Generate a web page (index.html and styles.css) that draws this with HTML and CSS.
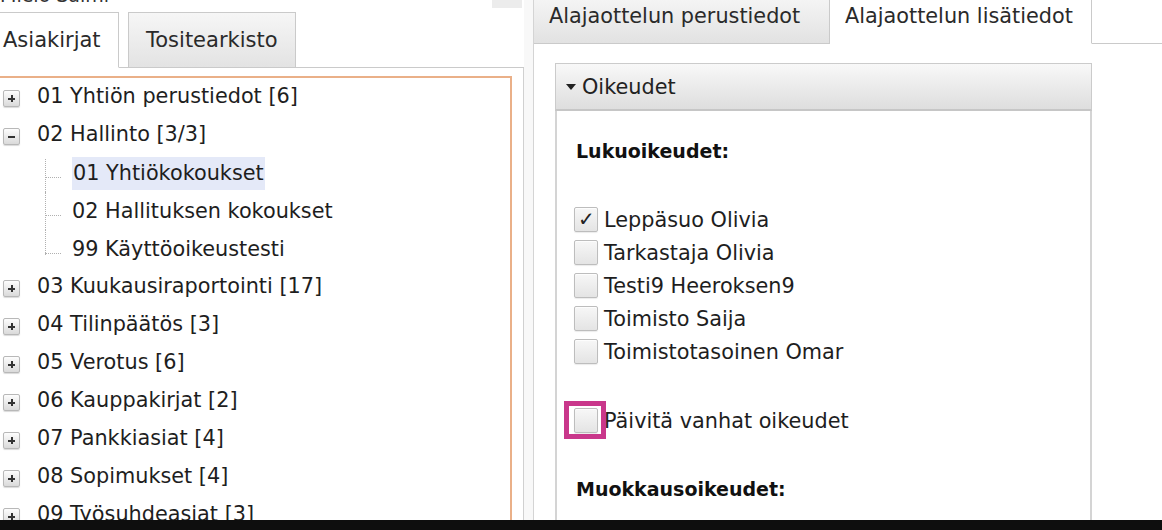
FILE: index.html
```html
<!DOCTYPE html>
<html lang="fi">
<head>
    <meta charset="UTF-8">
    <meta name="viewport" content="width=device-width, initial-scale=1.0">
    <title>Asiakirjat</title>
    <link rel="stylesheet" href="styles.css">
</head>
<body>
    <div class="screen">
        <div class="left">
            <div class="topline">
                <span class="user">Mielo Salmi</span>
                <span class="topbtn"></span>
            </div>
            <div class="tabs">
                <div class="tab active">Asiakirjat</div>
                <div class="tab-gap"></div>
                <div class="tab">Tositearkisto</div>
                <div class="tab-fill"></div>
            </div>
            <div class="tabpanel">
                <div class="treebox">
                    <ul class="tree">
                        <li><span class="tog"></span>01 Yhtiön perustiedot [6]</li>
                        <li><span class="tog minus"></span>02 Hallinto [3/3]</li>
                        <li class="sub">
                            <ul>
                                <li><span class="sel">01 Yhtiökokoukset</span></li>
                                <li>02 Hallituksen kokoukset</li>
                                <li>99 Käyttöoikeustesti</li>
                            </ul>
                        </li>
                        <li><span class="tog"></span>03 Kuukausiraportointi [17]</li>
                        <li><span class="tog"></span>04 Tilinpäätös [3]</li>
                        <li><span class="tog"></span>05 Verotus [6]</li>
                        <li><span class="tog"></span>06 Kauppakirjat [2]</li>
                        <li><span class="tog"></span>07 Pankkiasiat [4]</li>
                        <li><span class="tog"></span>08 Sopimukset [4]</li>
                        <li><span class="tog"></span>09 Työsuhdeasiat [3]</li>
                    </ul>
                </div>
            </div>
        </div>
        <div class="splitter"></div>
        <div class="right">
            <div class="rtabs">
                <div class="rtab">Alajaottelun perustiedot</div>
                <div class="rtab active">Alajaottelun lisätiedot</div>
                <div class="rtab-fill"></div>
            </div>
            <div class="rcontent">
                <div class="panel">
                    <div class="panel-head"><span class="caret"></span>Oikeudet</div>
                    <div class="panel-body">
                        <h4>Lukuoikeudet:</h4>
                        <ul class="checks">
                            <li><span class="cb checked"></span>Leppäsuo Olivia</li>
                            <li><span class="cb"></span>Tarkastaja Olivia</li>
                            <li><span class="cb"></span>Testi9 Heeroksen9</li>
                            <li><span class="cb"></span>Toimisto Saija</li>
                            <li><span class="cb"></span>Toimistotasoinen Omar</li>
                        </ul>
                        <div class="update"><span class="cb marked"></span>Päivitä vanhat oikeudet</div>
                        <h4 class="edit">Muokkausoikeudet:</h4>
                    </div>
                </div>
            </div>
        </div>
    </div>
    <div class="bar"></div>
</body>
</html>
```
FILE: styles.css
```css
* {
    box-sizing: border-box;
    font-family: "DejaVu Sans", "Liberation Sans", sans-serif;
}
*::before,
*::after {
    box-sizing: border-box;
}
body {
    margin: 0;
    width: 1162px;
    height: 530px;
    overflow: hidden;
    background: #fff;
    color: #1e1e1e;
    font-size: 20.8px;
}
ul {
    list-style: none;
    margin: 0;
    padding: 0;
}
.screen {
    display: flex;
    height: 520px;
    overflow: hidden;
}
.bar {
    height: 10px;
    background: #0e0e0e;
}

/* left side */
.left {
    width: 524px;
    flex: none;
}
.topline {
    display: flex;
    justify-content: space-between;
    height: 12px;
    overflow: hidden;
}
.user {
    display: block;
    margin-top: -5px;
    line-height: 0;
    color: #333;
    font-size: 19px;
}
.topbtn {
    width: 30px;
    height: 8px;
    margin-right: 2px;
    background: #ececec;
}
.tabs {
    display: flex;
    align-items: flex-end;
    height: 56px;
}
.tab {
    height: 56px;
    line-height: 55px;
    padding: 0 17px;
    border: 1px solid #cacaca;
    background: linear-gradient(#f6f6f6, #e3e3e3);
    color: #2a2a2a;
    font-size: 21px;
    white-space: nowrap;
}
.tab.active {
    width: 119px;
    padding: 0 3px;
    border-left: none;
    border-bottom-color: #fff;
    background: #fff;
}
.tab-gap {
    width: 9px;
    border-bottom: 1px solid #cacaca;
}
.tab-fill {
    flex: 1;
    border-bottom: 1px solid #cacaca;
}
.tab-gap, .tab-fill {
    align-self: stretch;
}
.tabpanel {
    height: 452px;
    border-right: 1px solid #d0d0d0;
    padding: 8px 11px 0 0;
}
.treebox {
    height: 100%;
    border: 2px solid #eab088;
    border-left: none;
    border-bottom: none;
}
.tree > li {
    height: 38px;
    line-height: 37px;
    white-space: nowrap;
}
.tree > li.sub {
    height: auto;
}
.tog {
    display: inline-block;
    width: 17px;
    height: 17px;
    margin: 0 17px 0 3px;
    vertical-align: -4px;
    border: 1px solid #b8b8b8;
    border-radius: 2px;
    background:
        linear-gradient(#333, #333) center / 7px 2px no-repeat,
        linear-gradient(#333, #333) center / 2px 7px no-repeat,
        linear-gradient(#fdfdfd, #dadada);
    box-shadow: 0 1px 1px rgba(0, 0, 0, 0.15);
}
.tog.minus {
    background:
        linear-gradient(#333, #333) center / 7px 2px no-repeat,
        linear-gradient(#fdfdfd, #dadada);
}
.sub ul {
    margin-left: 45px;
}
.sub li {
    position: relative;
    height: 38px;
    line-height: 38px;
    padding-left: 27px;
    white-space: nowrap;
}
.sub li::before {
    content: '';
    position: absolute;
    left: 0;
    top: 0;
    bottom: 0;
    border-left: 1px dotted #b0b0b0;
}
.sub li:first-child::before {
    top: 5px;
}
.sub li:last-child::before {
    bottom: 13px;
}
.sub li::after {
    content: '';
    position: absolute;
    left: 0;
    top: 23px;
    width: 16px;
    border-top: 1px dotted #b0b0b0;
}
.sel {
    display: inline-block;
    line-height: 33px;
    padding: 0 1px;
    background: #e4e9f8;
}

/* divider */
.splitter {
    width: 9px;
    flex: none;
    background: #f8f8f8;
}

/* right side */
.right {
    flex: 1;
    border-left: 1px solid #d4d4d4;
}
.rtabs {
    display: flex;
    height: 44px;
}
.rtab {
    width: 296px;
    padding: 3px 0 0 15px;
    line-height: 26px;
    border-right: 1px solid #cacaca;
    border-bottom: 1px solid #cacaca;
    background: linear-gradient(#f4f4f4, #e2e2e2);
    color: #2a2a2a;
    white-space: nowrap;
}
.rtab.active {
    width: 262px;
    border-bottom-color: #fff;
    background: #fff;
}
.rtab-fill {
    flex: 1;
    border-bottom: 1px solid #cacaca;
}
.rcontent {
    padding: 19px 70px 0 21px;
}
.panel-head {
    height: 48px;
    line-height: 46px;
    padding-left: 10px;
    border: 1px solid #cbcbcb;
    border-bottom: 2px solid #c6c6c6;
    background: linear-gradient(#f8f8f8, #dedede);
    color: #222;
}
.caret {
    display: inline-block;
    width: 0;
    height: 0;
    margin: 0 6px 2px 0;
    vertical-align: middle;
    border-left: 5px solid transparent;
    border-right: 5px solid transparent;
    border-top: 6px solid #222;
}
.panel-body {
    height: 420px;
    padding: 28px 0 0 17px;
    border-left: 2px solid #d4d4d4;
    border-right: 2px solid #d4d4d4;
}
.panel-body h4 {
    margin: 0 0 0 2px;
    line-height: 24px;
    font-size: 19px;
    font-weight: bold;
    color: #111;
}
.checks {
    margin-top: 40px;
}
.checks li,
.update {
    display: flex;
    align-items: center;
    gap: 6px;
    height: 33px;
    white-space: nowrap;
}
.update {
    margin-top: 36px;
}
.panel-body .edit {
    margin-top: 40px;
}
.cb {
    position: relative;
    width: 24px;
    height: 25px;
    flex: none;
    border: 1px solid #bdbdbd;
    border-radius: 2px;
    background: linear-gradient(#f7f7f7, #e4e4e4);
    box-shadow: inset 0 1px 1px rgba(255, 255, 255, 0.8), 0 1px 1px rgba(0, 0, 0, 0.08);
}
.cb.checked::after {
    content: '\2713';
    position: absolute;
    left: 3px;
    top: -1px;
    font-size: 20px;
    line-height: 25px;
    color: #222;
}
.cb.marked::after {
    content: '';
    position: absolute;
    left: -11px;
    top: -8px;
    width: 42px;
    height: 38px;
    border: 5px solid #c9378b;
}
```
